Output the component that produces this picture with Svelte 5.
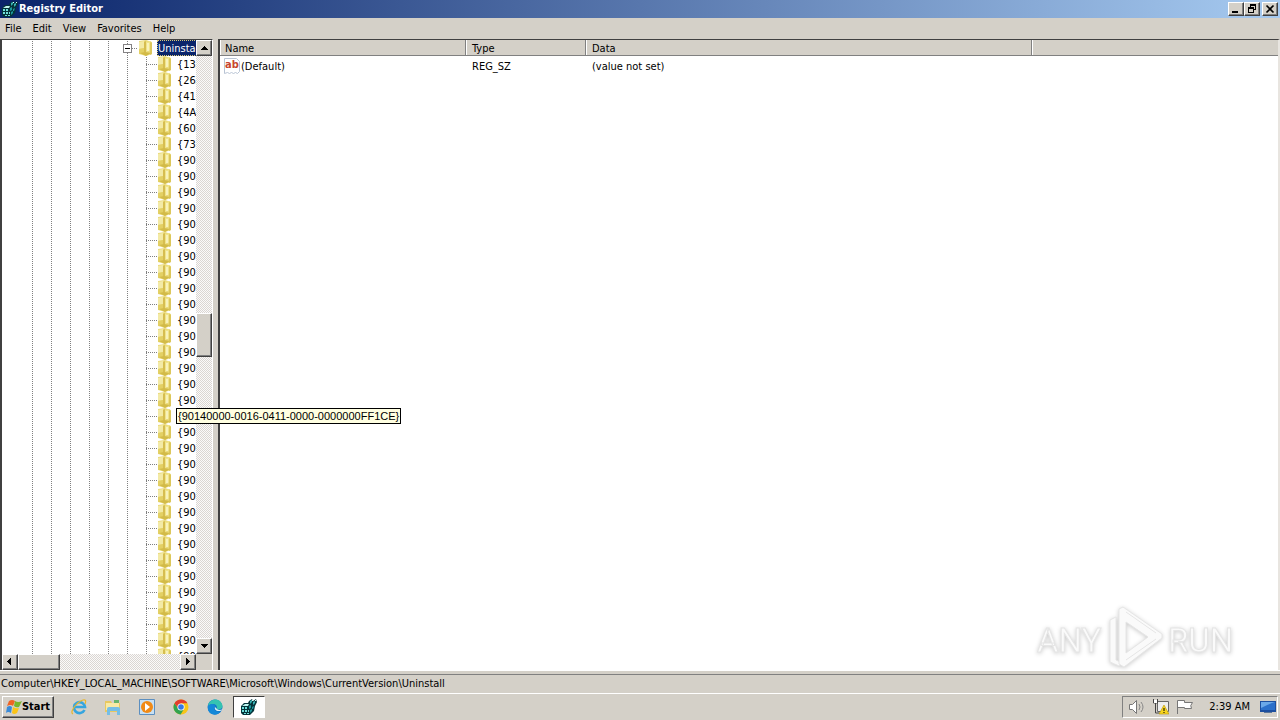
<script>
  const menus = ['File', 'Edit', 'View', 'Favorites', 'Help'];
  const keys = ['{13A', '{26A', '{410', '{4A', '{60E', '{73F', ...Array(32).fill('{90')];
  const path = 'Computer\\HKEY_LOCAL_MACHINE\\SOFTWARE\\Microsoft\\Windows\\CurrentVersion\\Uninstall';
</script>

{#snippet regedit()}
  <svg class="icon" viewBox="0 0 16 16" aria-hidden="true">
    <path d="M0 7l3-3h4l1-2 3-2 1 2 3-2 1 3-2 4-1 5-4 4H2l-2-2z" fill="#04343a" />
    <path d="M1 7l3-2h4L7 7z" fill="#bff5f0" />
    <path d="M1 8h2v2H1zM4 8h2v2H4zM1 11h2v2H1zM4 11h2v2H4zM7 11h1v2H7zM3 14h2v1H3zM6 14h2v1H6z" fill="#6fe0dc" />
    <path d="M8 7l2-1v3L8 10zM9 11l2-1v2l-2 2zM11 8l2-1-1 3h-1z" fill="#1d989c" />
    <path d="M9 2l2-1v2L9 5zM12 3l2-1v2l-2 2z" fill="#37b3b4" />
    <path d="M11 1h1v1h-1zM14 1h1v1h-1z" fill="#d4fffb" />
  </svg>
{/snippet}

{#snippet folder()}
  <svg class="folder" viewBox="0 0 16 16" aria-hidden="true">
    <path d="M1 1l7-1 6 2v12l-6 2-7-2z" fill="#e9d97a" />
    <path d="M1 2l5-1v7l-5 1z" fill="#f3eaa6" />
    <path d="M1 9l5-1v6H1z" fill="#e3d064" />
    <path d="M6 2l2-1v12l-2 2z" fill="#d6bd50" />
    <path d="M8 2l5-1v9l-5 2z" fill="#f0e48a" />
    <path d="M9 3h2v8H9z" fill="#f8f2bc" />
    <path d="M12 2l2 1v11l-2 1z" fill="#dcc75c" />
    <path d="M2 13l5-1 6 1-5 3z" fill="#d3bb48" />
  </svg>
{/snippet}

{#snippet arrow(d)}
  <svg class="arrow" viewBox="0 0 8 8" shape-rendering="crispEdges" aria-hidden="true"><path {d} /></svg>
{/snippet}

<div class="desktop">
  <header class="title">
    {@render regedit()}
    <h1>Registry Editor</h1>
    <div class="window-buttons">
      <button class="raised" aria-label="Minimize"><svg viewBox="0 0 12 10" shape-rendering="crispEdges"><path d="M2 7h6v2H2z" /></svg></button>
      <button class="raised" aria-label="Restore"><svg viewBox="0 0 12 10" shape-rendering="crispEdges"><path fill-rule="evenodd" d="M4 0h6v6H8V5h1V2H5v1H4zM2 3h6v6H2zM3 5v3h4V5z" /></svg></button>
      <button class="raised close" aria-label="Close"><svg viewBox="0 0 12 10"><path d="M2.5 1.5l7 7m0-7l-7 7" fill="none" stroke="#000" stroke-width="1.7" /></svg></button>
    </div>
  </header>

  <nav class="menu">
    {#each menus as item}<button>{item}</button>{/each}
  </nav>

  <main>
    <section class="tree-pane">
      <div class="tree-row">
        <div class="tree" role="tree" aria-label="Registry keys">
          <div class="node root" role="treeitem" aria-selected="true" aria-expanded="true" tabindex="0">
            <svg class="expander" viewBox="0 0 9 9" shape-rendering="crispEdges"><path d="M.5.5h8v8h-8z" fill="#fff" stroke="#848284" /><path d="M2 4h5v1H2z" /></svg>
            <span class="dots short"></span>
            {@render folder()}
            <span class="label selected">Uninstall</span>
          </div>
          {#each keys as key}
            <div class="node child" role="treeitem" aria-selected="false" tabindex="-1">
              <span class="dots"></span>
              {@render folder()}
              <span class="label">{key}</span>
            </div>
          {/each}
        </div>
        <div class="scroll vertical">
          <button class="raised" aria-label="Scroll up">{@render arrow('M4 2h1v1h1v1h1v1h1v1H1V5h1V4h1V3h1z')}</button>
          <span class="before"></span>
          <span class="raised thumb"></span>
          <span class="after"></span>
          <button class="raised" aria-label="Scroll down">{@render arrow('M1 2h7v1H7v1H6v1H5v1H4V5H3V4H2V3H1z')}</button>
        </div>
      </div>
      <div class="scroll horizontal">
        <button class="raised" aria-label="Scroll left">{@render arrow('M5 0v7H4V6H3V5H2V4H1V3h1V2h1V1h1V0z')}</button>
        <span class="raised thumb"></span>
        <span class="after"></span>
        <button class="raised" aria-label="Scroll right">{@render arrow('M2 0h1v1h1v1h1v1h1v1H5v1H4v1H3v1H2z')}</button>
        <span class="corner"></span>
      </div>
      <div class="tooltip" role="tooltip">{'{90140000-0016-0411-0000-0000000FF1CE}'}</div>
    </section>

    <section class="list-pane">
      <table>
        <colgroup><col class="c-name" /><col class="c-type" /><col class="c-data" /><col /></colgroup>
        <thead><tr><th>Name</th><th>Type</th><th>Data</th><th aria-label="Empty"></th></tr></thead>
        <tbody>
          <tr>
            <td>
              <div class="value">
                <svg class="icon" viewBox="0 0 16 16"><path d="M.5.5h12l3 3v10l-2 2-2-1-2 1-2-1-2 1-2-1-3 1z" fill="#fff" stroke="#b9c4d4" /><text x="1" y="10" class="ab">ab</text></svg>
                <span>(Default)</span>
              </div>
            </td>
            <td>REG_SZ</td><td>(value not set)</td><td></td>
          </tr>
        </tbody>
      </table>
      <svg class="watermark" viewBox="0 0 200 70" role="img" aria-label="ANY RUN">
        <g class="mark">
          <text x="1" y="52">ANY</text>
          <path d="M74 20l6-3v43l6 3-3 3-9-4z" />
          <path d="M83 9l4-2 39 27v4L88 67l-5-3zM90 22v31l22-16z" fill-rule="evenodd" />
          <path d="M90 12l30 21M90 60l30-21" fill="none" />
          <text x="132" y="52">RUN</text>
        </g>
      </svg>
    </section>
  </main>

  <div class="status"><span>{path}</span></div>

  <footer class="taskbar">
    <button class="raised start">
      <svg class="icon" viewBox="0 0 16 16" aria-hidden="true">
        <path d="M3 2q3-2 6 0L7 7Q5 5 1 7z" fill="#ef6424" />
        <path d="M9 2q3 2 7 0l-3 6q-3 1-5-1z" fill="#78b62c" />
        <path d="M1 8q3-2 5 0l-1 6q-3-2-5 0z" fill="#3a8bd8" />
        <path d="M7 8q3 2 6 1l-2 5q-3 2-5 0z" fill="#fbc416" />
      </svg>
      Start
    </button>
    <div class="launch">
      <button aria-label="Internet Explorer">
        <svg class="icon" viewBox="0 0 16 16"><path d="M13.500 11a5.500 5.500 0 1 1 .5-3H4" fill="none" stroke="#35a5df" stroke-width="2.600" /><path d="M2 15C-2 13 6 3 12 1q4-1 2 4" fill="none" stroke="#e8b62e" stroke-width="1.200" /></svg>
      </button>
      <button aria-label="Explorer">
        <svg class="icon" viewBox="0 0 16 16"><path d="M0 2h6l1 2h8v9H0z" fill="#e8c860" /><path d="M1 4h13v7H1z" fill="#f8eaa5" /><path d="M9 1h5v3H9z" fill="#69b56c" /><path d="M2 16V10q0-2 2-2h9q2 0 2 2v6h-3v-4H5v4z" fill="#75bee6" /></svg>
      </button>
      <button aria-label="Media Player">
        <svg class="icon" viewBox="0 0 16 16"><path d="M.5.5h15v15H.5z" fill="#c8e0f3" stroke="#5c8fc0" /><circle cx="8" cy="8" r="6" fill="#f18a16" /><path d="M6 4l5 4-5 4z" fill="#fff" /></svg>
      </button>
      <button aria-label="Chrome">
        <svg class="icon" viewBox="0 0 16 16"><circle cx="8" cy="8" r="7.5" fill="#f7c518" /><path d="M1.5 4.2A7.5 7.5 0 0 0 7.6 15.5L11 10 5 9z" fill="#32a350" /><path d="M1.5 4.2A7.5 7.5 0 0 1 14.5 4.2H8L5 9z" fill="#e23c2e" /><circle cx="8" cy="8" r="3.6" fill="#fff" /><circle cx="8" cy="8" r="2.8" fill="#3478e6" /></svg>
      </button>
      <button aria-label="Edge">
        <svg class="icon" viewBox="0 0 16 16"><circle cx="8" cy="8" r="7.5" fill="#1673c6" /><path d="M1 7C2-1 14-2 15.5 7c0 4-5 4-6 3 2-4-3-7-8.500-3z" fill="#35c3b1" /><path d="M1 7c4-4 8-1 7 1-2 2 0 6 6 4-3 5-11 5-13-1z" fill="#1488d8" /><path d="M8 8c-1 3 2 5 6.500 3.500l1.500-1.500q-4 2-6 0z" fill="#d8eef5" /></svg>
      </button>
      <button class="active" aria-label="Registry Editor">{@render regedit()}</button>
    </div>
    <div class="tray">
      <svg class="icon" viewBox="0 0 16 16"><path d="M.5 5.500h3l4-4v13l-4-4h-3z" fill="#fff" stroke="#777" /><path d="M10 5q2 3 0 6M12 3q4 5 0 10" fill="none" stroke="#888" /></svg>
      <svg class="icon" viewBox="0 0 16 16"><path d="M4.500 2.500h11v10h-11z" fill="#eee" stroke="#666" /><path d="M.5 0v4h4V0M2.500 4v10h4" fill="none" stroke="#444" /><path d="M1 1h3v3H1z" fill="#fff" /><path d="M11 6l5 9H6z" fill="#f8d51e" stroke="#b89505" stroke-width=".6" /><path d="M10.500 9h1v3h-1zM10.500 13h1v1h-1z" /></svg>
      <svg class="icon flag" viewBox="0 0 16 16"><path d="M.5 15V1.500h7v2h8q-3 3-1 6h-7v-1h-7" fill="#fff" stroke="#777" /></svg>
      <time>2:39 AM</time>
      <svg class="icon" viewBox="0 0 16 16"><path d="M0 2h16v11H0z" fill="#1d4f9f" /><path d="M1 3h14v8H1z" fill="#2c70ca" /><path d="M1 3h14q-6 2-14 6z" fill="#6ba8e8" /><path d="M4 13h8v1H4z" fill="#5d7698" /></svg>
    </div>
  </footer>
</div>

<style>
  :global(body) { margin: 0; overflow: hidden; }
  .desktop {
    --face: #d4d0c8;
    --dither: repeating-conic-gradient(#fbfafa 0 25%, #dad6d2 0 50%) 0 0 / 2px 2px;
    display: flex; flex-direction: column; height: 100vh;
    background: var(--face); color: #000;
    font: 11px/14px "DejaVu Sans Condensed", "DejaVu Sans", sans-serif;
    white-space: nowrap;
  }
  * { box-sizing: border-box; }
  button { font: inherit; color: inherit; background: none; border: 0; padding: 0; }
  .icon { width: 16px; height: 16px; flex: none; display: block; }
  .raised {
    background: var(--face);
    border: 1px solid; border-color: #fff #404040 #404040 #fff;
    box-shadow: inset -1px -1px #808080;
    display: flex; align-items: center; justify-content: center;
  }

  .title { display: flex; align-items: center; gap: 1px; height: 18px; flex: none; padding: 0 2px; color: #fff; background: linear-gradient(90deg, #0a246a, #a6caf0); }
  h1 { margin: 0; flex: 1; font-size: 11px; line-height: 18px; font-weight: bold; }
  .window-buttons { display: flex; }
  .window-buttons button { width: 16px; height: 14px; }
  .window-buttons svg { width: 12px; height: 10px; flex: none; }
  .window-buttons .close { margin-left: 2px; }

  .menu { display: flex; height: 21px; flex: none; align-items: center; gap: 11px; padding: 0 5px; }

  main { flex: 1; min-height: 0; display: flex; gap: 5px; }
  .tree-pane { position: relative; width: 213px; flex: none; display: flex; flex-direction: column; background: #fff; border: 1px solid #404040; border-width: 1px 0 0 2px; border-right: 1px solid #fff; }
  .tree-row { flex: 1; min-height: 0; display: flex; }
  .tree {
    flex: 1; min-width: 0; overflow: hidden;
    background:
      linear-gradient(#fff 50%, transparent 0) 0 0 / 100% 2px,
      repeating-linear-gradient(90deg, transparent 0 18px, #808080 0 19px) 12px 0 / 114px 100% no-repeat;
  }
  .node { display: flex; align-items: center; height: 16px; }
  .root { padding-left: 121px; }
  .child { padding-left: 144px; background: linear-gradient(#fff 50%, transparent 0) 144px 0 / 1px 2px repeat-y, linear-gradient(#808080, #808080) 144px 0 / 1px 100% no-repeat; }
  .expander { width: 9px; height: 9px; flex: none; background: #fff; }
  .dots { width: 11px; height: 1px; flex: none; background: repeating-linear-gradient(90deg, #808080 0 1px, transparent 0 2px); }
  .dots.short { width: 6px; }
  .folder { width: 16px; height: 16px; flex: none; }
  .label { padding: 1px 0 0 1px; margin-left: 3px; line-height: 15px; }
  .selected { background: #0a246a; color: #fff; outline: 1px dotted #d8c878; outline-offset: -1px; }

  .scroll { display: flex; background: var(--dither); flex: none; }
  .vertical { width: 16px; flex-direction: column; }
  .horizontal { height: 16px; }
  .scroll button { width: 16px; height: 16px; flex: none; }
  .arrow { width: 8px; height: 8px; }
  .vertical .before { flex: 258; }
  .vertical .thumb { flex: 42; }
  .vertical .after { flex: 282; }
  .horizontal .thumb { width: 42px; }
  .horizontal .after { flex: 1; }
  .corner { width: 16px; background: var(--face); }
  .tooltip { position: absolute; left: 174px; top: 368px; z-index: 1; height: 16px; padding: 0 1px; border: 1px solid #000; background: #ffffe1; font-family: "Liberation Sans", sans-serif; }

  .list-pane { position: relative; flex: 1; min-width: 0; background: #fff; border: 1px solid #404040; border-width: 1px 0 0 2px; border-right: 2px solid #e8e5e0; }
  table { width: 100%; table-layout: fixed; border-collapse: separate; border-spacing: 0; }
  .c-name { width: 246px; }
  .c-type { width: 120px; }
  .c-data { width: 446px; }
  th { height: 16px; padding: 2px 6px 0; line-height: 13px; text-align: left; font-weight: normal; background: var(--face); border-right: 1px solid #808080; border-bottom: 1px solid #808080; box-shadow: inset 1px 0 #fff; }
  th:first-child { padding-left: 5px; }
  th:last-child { border-right: 0; }
  td { height: 20px; padding: 1px 6px 0; }
  td:first-child { padding: 0 4px; }
  .value { display: flex; align-items: center; gap: 1px; }
  .value span { padding-top: 1px; }
  .ab { font: bold 11px "DejaVu Sans Condensed", sans-serif; fill: #c8452e; }
  .watermark { position: absolute; right: 42px; bottom: 0; width: 200px; height: 70px; filter: drop-shadow(0 1px 2px #ccc); }
  .mark { fill: #fafafa; stroke: #e6e6e6; stroke-width: 1; }
  .mark text { font: 33px Roboto, "Liberation Sans", sans-serif; }

  .status { flex: none; height: 24px; padding: 3px 0 2px; border-bottom: 1px solid #fff; border-top: 1px solid #fff; }
  .status span { display: block; height: 18px; line-height: 18px; padding: 0 1px; border-top: 1px solid #808080; }

  .taskbar { flex: none; height: 26px; display: flex; align-items: center; padding: 0 2px; }
  .start { height: 22px; width: 52px; font-weight: bold; }
  .launch { flex: 1; display: flex; align-items: center; gap: 2px; padding-left: 9px; }
  .launch button { width: 32px; height: 22px; display: flex; align-items: center; justify-content: center; }
  .launch .active { background: #fff; border: 1px solid; border-color: #404040 #fff #fff #404040; }
  .tray { height: 22px; display: flex; align-items: center; gap: 8px; padding: 0 1px 0 6px; border: 1px solid; border-color: #808080 #fff #fff #808080; }
  .flag { margin-right: 8px; }
  time { margin-right: 2px; }
</style>
